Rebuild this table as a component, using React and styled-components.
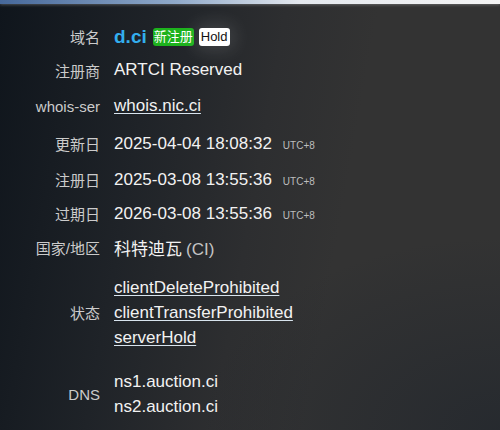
import React from "react";
import styled, { createGlobalStyle } from "styled-components";

const GlobalStyle = createGlobalStyle`
  html, body {
    margin: 0;
    padding: 0;
    background: #1a1e24;
  }
  body {
    font-family: "Liberation Sans", Arial, "Noto Sans CJK SC", sans-serif;
  }
`;

const rows = [
  { label: "注册商", h: 33.5, value: "ARTCI Reserved" },
  { label: "whois-ser", h: 38, link: ["whois.nic.ci"] },
  { label: "更新日", h: 37.5, date: "2025-04-04 18:08:32" },
  { label: "注册日", h: 34, date: "2025-03-08 13:55:36" },
  { label: "过期日", h: 34.5, date: "2026-03-08 13:55:36" },
];

export default function App() {
  return (
    <>
      <GlobalStyle />
      <StyledPage>
        <StyledTopBar />
        <StyledPanel>
          <StyledRow $h={33.5}>
            <StyledLabel>域名</StyledLabel>
            <StyledValue>
              <StyledDomain>d.ci</StyledDomain>
              <StyledBadge $kind="new">新注册</StyledBadge>
              <StyledBadge $kind="hold">Hold</StyledBadge>
            </StyledValue>
          </StyledRow>

          {rows.map((row) => (
            <StyledRow $h={row.h} key={row.label}>
              <StyledLabel>{row.label}</StyledLabel>
              <StyledValue>
                {row.value}
                {row.link &&
                  row.link.map((l) => (
                    <StyledLink href="#" key={l}>
                      {l}
                    </StyledLink>
                  ))}
                {row.date && (
                  <>
                    {row.date}
                    <StyledZone>UTC+8</StyledZone>
                  </>
                )}
              </StyledValue>
            </StyledRow>
          ))}

          <StyledRow $h={32}>
            <StyledLabel>国家/地区</StyledLabel>
            <StyledValue>
              科特迪瓦 <StyledMuted>(CI)</StyledMuted>
            </StyledValue>
          </StyledRow>

          <StyledRow $h={98}>
            <StyledLabel>状态</StyledLabel>
            <StyledList>
              <StyledLink href="#">clientDeleteProhibited</StyledLink>
              <StyledLink href="#">clientTransferProhibited</StyledLink>
              <StyledLink href="#">serverHold</StyledLink>
            </StyledList>
          </StyledRow>

          <StyledRow $h={66}>
            <StyledLabel>DNS</StyledLabel>
            <StyledList>
              <span>ns1.auction.ci</span>
              <span>ns2.auction.ci</span>
            </StyledList>
          </StyledRow>
        </StyledPanel>
      </StyledPage>
    </>
  );
}

const StyledPage = styled.div`
  width: 500px;
  height: 430px;
  overflow: hidden;
  display: flex;
  flex-direction: column;
  background: radial-gradient(
      ellipse 60% 45% at 100% 100%,
      rgba(30, 36, 44, 0.6),
      rgba(30, 36, 44, 0) 100%
    ),
    linear-gradient(100deg, #0f151c 0%, #1f2328 28%, #2d2e30 50%, #333 66%, #333 100%);
`;

const StyledTopBar = styled.div`
  height: 4px;
  flex: none;
  background: linear-gradient(to right, #46689a 0%, #8fa9c9 35%, #e4e8ee 60%, #f4f4f4 100%);
  box-shadow: 0 1px 3px rgba(255, 255, 255, 0.25);
`;

const StyledPanel = styled.div`
  padding-top: 16px;
  display: flex;
  flex-direction: column;
`;

const StyledRow = styled.div`
  display: grid;
  grid-template-columns: 100px 1fr;
  column-gap: 14px;
  align-items: center;
  height: ${(p) => p.$h}px;
`;

const StyledLabel = styled.div`
  text-align: right;
  font-size: 15px;
  color: #cbcbcb;
  white-space: nowrap;
`;

const StyledValue = styled.div`
  display: flex;
  align-items: baseline;
  font-size: 17px;
  color: #f2f2f2;
  white-space: nowrap;
`;

const StyledDomain = styled.span`
  font-size: 19px;
  font-weight: bold;
  color: #33aeee;
  margin-right: 6px;
`;

const StyledBadge = styled.span`
  align-self: center;
  font-size: 13px;
  line-height: 18px;
  padding: 0 ${(p) => (p.$kind === "new" ? "1px" : "2px")};
  margin-right: 5px;
  border-radius: 3px;
  color: ${(p) => (p.$kind === "new" ? "#fff" : "#111")};
  background: ${(p) => (p.$kind === "new" ? "#1db21d" : "#fff")};
  box-shadow: ${(p) =>
    p.$kind === "hold" ? "0 0 18px 4px rgba(255, 255, 255, 0.13)" : "none"};
`;

const StyledLink = styled.a`
  color: #f2f2f2;
  text-decoration: underline;
  text-decoration-color: #d8e4ee;
  text-underline-offset: 2px;
`;

const StyledZone = styled.span`
  font-size: 10px;
  color: #bdbdbd;
  margin-left: 11px;
`;

const StyledMuted = styled.span`
  color: #c4c4c4;
  margin-left: 4px;
`;

const StyledList = styled.div`
  display: flex;
  flex-direction: column;
  font-size: 17px;
  line-height: 25px;
  color: #f2f2f2;
  white-space: nowrap;
`;
